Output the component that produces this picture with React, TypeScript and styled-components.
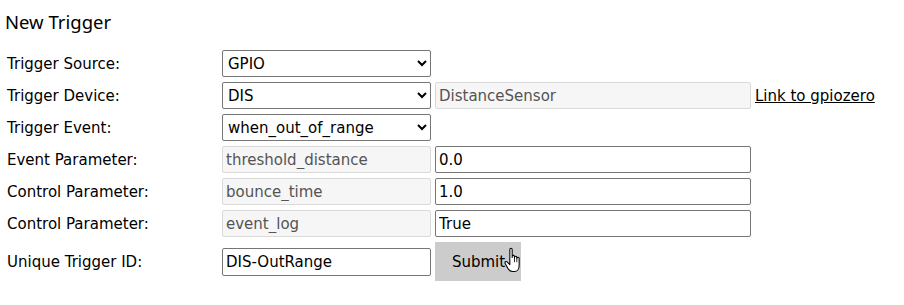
import React from "react";
import styled, { createGlobalStyle } from "styled-components";

const GlobalStyle = createGlobalStyle`
  body {
    margin: 0;
    background: #fff;
    color: #000;
    font-family: "DejaVu Sans", Verdana, sans-serif;
  }
`;

const Page = styled.div`
  padding: 8px 0 0 5px;
`;

const Title = styled.h2`
  margin: 0 0 14px;
  font-family: "Noto Sans", "Open Sans", sans-serif;
  font-size: 18.5px;
  font-weight: 400;
  line-height: 28px;
`;

const Form = styled.form`
  display: grid;
  grid-template-columns: 213px 209px 316px auto;
  column-gap: 4px;
  row-gap: 5px;
  align-items: center;
  justify-items: start;
  font-size: 15px;
`;

const Label = styled.label`
  padding-left: 2px;
  grid-column: 1;
`;

const fieldBase = `
  box-sizing: border-box;
  height: 27px;
  margin: 0;
  font-family: "DejaVu Sans", Verdana, sans-serif;
  font-size: 15px;
  border-radius: 2px;
  outline: none;
`;

const Select = styled.select`
  ${fieldBase}
  width: 209px;
  padding: 0 1px;
  border: 1px solid #767676;
  background: #fff;
  color: #000;
`;

const Input = styled.input<{ $readOnly?: boolean; $wide?: boolean }>`
  ${fieldBase}
  width: ${({ $wide }) => ($wide ? 316 : 209)}px;
  padding: 0 3px;
  border: 1px solid ${({ $readOnly }) => ($readOnly ? "#d9d9d9" : "#767676")};
  background: ${({ $readOnly }) => ($readOnly ? "#f6f6f6" : "#fff")};
  color: ${({ $readOnly }) => ($readOnly ? "#545454" : "#000")};
`;

const LastRowField = styled(Input)`
  height: 28px;
`;

const ExternalLink = styled.a`
  color: #000;
  text-decoration: underline;
  font-size: 15px;
`;

const SubmitWrap = styled.div`
  position: relative;
`;

const SubmitButton = styled.button`
  box-sizing: border-box;
  width: 86px;
  height: 39px;
  margin: 0;
  padding: 0 0 0 1px;
  border: none;
  background: #cccccc;
  color: #000;
  font-family: "DejaVu Sans", Verdana, sans-serif;
  font-size: 15px;
`;

const Cursor = styled.svg`
  position: absolute;
  left: 69px;
  top: 5px;
  pointer-events: none;
`;

const HandCursor = () => (
  <Cursor width="21" height="27" viewBox="0 0 18 23">
    <path
      d="M5 2 C5 0.6 7 0.6 7 2 L7 9 L7 8 C7 6.8 9 6.8 9 8 L9 9.5 L9 8.8 C9 7.6 11 7.6 11 8.8 L11 10 L11 9.6 C11 8.4 13 8.4 13 9.6 L13 15.5 C13 18.5 11.5 21 9 21 L7.2 21 C5.4 21 4.3 20 3.4 18.4 L1 14 C0.4 12.9 1.7 11.8 2.7 12.7 L5 15 Z"
      fill="#fff"
      stroke="#000"
      strokeWidth="0.9"
      strokeLinejoin="round"
    />
    <path d="M9 9.5 L9 13 M11 10 L11 13" stroke="#000" strokeWidth="0.7" />
  </Cursor>
);

export default function App() {
  return (
    <Page>
      <GlobalStyle />
      <Title>New Trigger</Title>
      <Form onSubmit={(e) => e.preventDefault()}>
        <Label>Trigger Source:</Label>
        <Select defaultValue="GPIO">
          <option>GPIO</option>
        </Select>
        <span />
        <span />

        <Label>Trigger Device:</Label>
        <Select defaultValue="DIS">
          <option>DIS</option>
        </Select>
        <Input $readOnly $wide readOnly defaultValue="DistanceSensor" />
        <ExternalLink href="#">Link to gpiozero</ExternalLink>

        <Label>Trigger Event:</Label>
        <Select defaultValue="when_out_of_range">
          <option>when_out_of_range</option>
        </Select>
        <span />
        <span />

        <Label>Event Parameter:</Label>
        <Input $readOnly readOnly defaultValue="threshold_distance" />
        <Input $wide defaultValue="0.0" />
        <span />

        <Label>Control Parameter:</Label>
        <Input $readOnly readOnly defaultValue="bounce_time" />
        <Input $wide defaultValue="1.0" />
        <span />

        <Label>Control Parameter:</Label>
        <Input $readOnly readOnly defaultValue="event_log" />
        <Input $wide defaultValue="True" />
        <span />

        <Label>Unique Trigger ID:</Label>
        <LastRowField defaultValue="DIS-OutRange" />
        <SubmitWrap>
          <SubmitButton type="submit">Submit</SubmitButton>
          <HandCursor />
        </SubmitWrap>
        <span />
      </Form>
    </Page>
  );
}
